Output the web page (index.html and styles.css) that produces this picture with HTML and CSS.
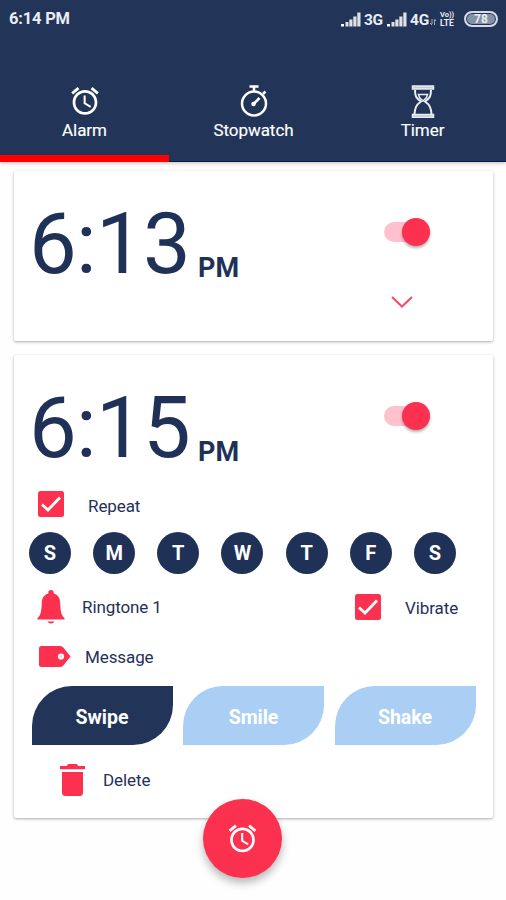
FILE: index.html
```
<!DOCTYPE html>
<html lang="en">
<head>
<meta charset="utf-8">
<title>Alarm</title>
<link rel="stylesheet" href="styles.css">
</head>
<body>
<svg class="defs" aria-hidden="true">
  <symbol id="alarm" viewBox="0 0 24 24"><path d="M22 5.72l-4.6-3.86-1.29 1.53 4.6 3.86L22 5.72zM7.88 3.39L6.6 1.86 2 5.71l1.29 1.53 4.59-3.85zM12.5 8H11v6l4.75 2.85.75-1.23-4-2.37V8zM12 4c-4.97 0-9 4.03-9 9s4.02 9 9 9c4.97 0 9-4.03 9-9s-4.03-9-9-9zm0 16c-3.87 0-7-3.13-7-7s3.13-7 7-7 7 3.13 7 7-3.13 7-7 7z"/></symbol>
  <symbol id="signal" viewBox="0 0 20 15"><path d="M0 12h3v2.500H0z"/><path d="M4.500 10h3v4.500h-3zM8.300 7.500h3.200v7H8.300zM12.300 4.500h3.200v10h-3.200zM16.300.500h3.200v14h-3.200z" opacity=".85"/></symbol>
  <symbol id="check" viewBox="0 0 26 26"><rect width="26" height="26" rx="2.500"/><path d="M4 13.500l6 5.500L22 6.500" fill="none" stroke="#fff" stroke-width="2.800"/></symbol>
</svg>
<header class="header">
  <div class="status">
    <span class="clock">6:14 PM</span>
    <div class="indicators">
      <svg class="signal"><use href="#signal"/></svg>
      <span class="net net-3g">3G</span>
      <svg class="signal"><use href="#signal"/></svg>
      <span class="net">4G</span>
      <svg class="data" viewBox="0 0 6 6"><path d="M2 0v5M4.500 1v5M0 4l2 2M4.500 0l1.500 2" stroke="#fff" opacity=".6" fill="none"/></svg>
      <span class="volte"><span>Vo))</span><span class="lte">LTE</span></span>
      <span class="battery">78</span>
    </div>
  </div>
  <nav class="tabs">
    <a class="tab active">
      <svg class="tab-icon" viewBox="0 0 34 34"><use href="#alarm" x="0.500" y="0.500" width="33" height="33"/></svg>
      <span>Alarm</span>
    </a>
    <a class="tab">
      <svg class="tab-icon line" viewBox="0 0 34 34" stroke="#fff" stroke-width="2.500"><circle cx="17" cy="19.500" r="12"/><path d="M12.500 2.500h9M17 3v5M26 10l2.500-2.500M16.500 20l6-6"/><circle cx="16.500" cy="20" r="1"/></svg>
      <span>Stopwatch</span>
    </a>
    <a class="tab">
      <svg class="tab-icon line" viewBox="0 0 34 34" stroke="#e8ebf1" stroke-width="2"><path d="M6.500 2h21v3h-21zM6.500 30.500h21v3h-21z" fill="#c5cbd8" stroke-width="1.500"/><path d="M9 6c0 6 1 8 6 11.500C10 21 9 24 8.500 30M25 6c0 6-1 8-6 11.500C24 21 25 24 25.500 30"/><path d="M12.500 10.500h9l-1 3-3.500 3.500-3.500-3.500z" stroke-width="1.500"/></svg>
      <span>Timer</span>
    </a>
  </nav>
</header>
<main class="list">
  <section class="card">
    <div class="card-top">
      <div class="time"><span class="digits">6:13</span><span class="ampm">PM</span></div>
      <div class="controls">
        <span class="switch"><span class="knob"></span></span>
        <svg class="chevron" viewBox="0 0 24 14"><path d="M2 2l10 9.500L22 2" fill="none" stroke="#f0506b" stroke-width="2.200"/></svg>
      </div>
    </div>
  </section>
  <section class="card expanded">
    <div class="card-top">
      <div class="time"><span class="digits">6:15</span><span class="ampm">PM</span></div>
      <div class="controls"><span class="switch"><span class="knob"></span></span></div>
    </div>
    <div class="row repeat"><svg class="check"><use href="#check"/></svg><span>Repeat</span></div>
    <div class="days"><span>S</span><span>M</span><span>T</span><span>W</span><span>T</span><span>F</span><span>S</span></div>
    <div class="row ringtone">
      <svg class="bell" viewBox="0 0 28 34"><path d="M14 0a2.700 2.700 0 0 1 2.600 3.500C21 4.500 23 8 23.200 13c.3 8 1 12.500 4.300 15v1.500H.500V28c3.300-2.500 4-7 4.300-15C5 8 7 4.500 11.400 3.500A2.700 2.700 0 0 1 14 0zM10.500 31.500h7c-1 2.500-6 2.500-7 0z"/></svg>
      <span class="ringtone-name">Ringtone 1</span>
      <svg class="check"><use href="#check"/></svg><span class="vibrate">Vibrate</span>
    </div>
    <div class="row message">
      <svg class="tag" viewBox="0 0 32 21"><path d="M2.500 0H21q2 0 3.300 1.500L31.500 10.500 24.300 19.500Q23 21 21 21H2.500Q0 21 0 18.500v-16Q0 0 2.500 0z"/><circle cx="22" cy="10.500" r="3.100" fill="#fff"/><circle cx="22" cy="10.500" r="1" fill="#ffb8c4"/></svg>
      <span>Message</span>
    </div>
    <div class="modes"><button class="mode selected">Swipe</button><button class="mode">Smile</button><button class="mode">Shake</button></div>
    <div class="row delete">
      <svg class="trash" viewBox="0 0 25 32"><path d="M0 2h7q0-2 2-2h7q2 0 2 2h7v3.200H0zM2 8h21v20.500q0 3.500-3.500 3.500h-14Q2 32 2 28.500z"/></svg>
      <span>Delete</span>
    </div>
  </section>
</main>
<button class="fab" aria-label="Add alarm"><svg viewBox="0 0 24 24"><use href="#alarm"/></svg></button>
</body>
</html>
```
FILE: styles.css
```
* { box-sizing: border-box; }
body {
  margin: 0;
  width: 506px;
  height: 900px;
  overflow: hidden;
  position: relative;
  background: #fefefe;
  color: #1f3157;
  font-family: Roboto, "Liberation Sans", sans-serif;
}
svg { display: block; flex: none; }
button { border: 0; padding: 0; font-family: inherit; }
.defs { position: absolute; width: 0; height: 0; }

.header {
  height: 162px;
  background: #223558;
  color: #fff;
  border-bottom: 1px solid #07184a;
  box-shadow: 0 1px 4px rgba(60, 20, 30, .3);
}
.status {
  height: 38px;
  padding: 0 8px 0 9px;
  display: flex;
  justify-content: space-between;
  align-items: center;
  color: #e9ecf2;
}
.clock { font-size: 16.5px; font-weight: 700; line-height: 38px; letter-spacing: -.2px; }
.indicators { display: flex; align-items: center; height: 36px; }
.signal { width: 20px; height: 15px; fill: #fff; }
.net { font-size: 15.5px; font-weight: 700; margin-left: 3px; line-height: 38px; padding-top: 1px; letter-spacing: -.2px; }
.net-3g { margin-right: 4px; }
.data { width: 6px; height: 6px; margin: 5px 4px 0 1px; }
.volte { display: flex; flex-direction: column; align-items: flex-start; width: 17px; font-size: 7.5px; line-height: 8px; font-weight: 700; white-space: nowrap; }
.lte { font-size: 8.500px; }
.battery {
  width: 34px;
  height: 16px;
  margin-left: 7px;
  border: 2px solid #d5dae3;
  border-radius: 8px;
  background: #8390a8;
  box-shadow: inset 0 0 0 1px #223558;
  font-size: 12px;
  line-height: 12px;
  font-weight: 700;
  text-align: center;
}
.tabs { display: grid; grid-template-columns: repeat(3, 169px); height: 124px; }
.tab {
  display: flex;
  flex-direction: column;
  align-items: center;
  padding-top: 46px;
  font-size: 17px;
  line-height: 22px;
  height: 124px;
  letter-spacing: -.05px;
  -webkit-text-stroke: .15px #fff;
}
.tab-icon { width: 34px; height: 34px; fill: #fff; margin-bottom: 1px; }
.tab-icon.line { fill: none; }
.tab.active { border-bottom: 7px solid #fe0000; }

.list { padding: 9px 13px 0 14px; display: grid; gap: 15px; }
.card {
  height: 170px;
  background: #fff;
  border-radius: 2px;
  box-shadow: 0 1px 3px rgba(0, 0, 0, .32);
}
.card.expanded { height: 463px; margin-top: -1px; }
.card-top { display: flex; justify-content: space-between; height: 134px; padding: 28px 63px 0 15px; }
.time { display: flex; }
.digits { font-size: 85px; line-height: 90px; letter-spacing: -.7px; width: 169px; }
.ampm { font-size: 27px; line-height: 32px; font-weight: 700; padding-top: 53px; }
.controls { padding-top: 19px; width: 46px; }
.switch { display: flex; position: relative; justify-content: flex-end; align-items: center; height: 28px; }
.switch::before { content: ""; position: absolute; left: 0; top: 4px; width: 38px; height: 20px; border-radius: 10px; background: #ffc1cd; }
.knob { position: relative; width: 28px; height: 28px; border-radius: 50%; background: #fc304f; box-shadow: 0 2px 3px rgba(0, 0, 0, .32); }
.chevron { width: 24px; height: 14px; margin: 49px 0 0 6px; }

.row { display: flex; align-items: center; font-size: 17px; line-height: 22px; letter-spacing: -.1px; }
.row svg { fill: #fc304f; }
.check { width: 26px; height: 26px; }
.repeat { padding-left: 24px; height: 30px; gap: 24px; }
.repeat span { padding-top: 3px; }
.days { display: flex; justify-content: space-between; padding: 13px 37px 0 15px; height: 68px; }
.days span {
  width: 42px;
  height: 42px;
  border-radius: 50%;
  background: #1f3157;
  color: #fff;
  font-size: 20px;
  line-height: 43px;
  font-weight: 700;
  text-align: center;
}
.ringtone { padding-left: 23px; height: 40px; }
.bell { width: 28px; height: 34px; }
.ringtone-name { margin-left: 17px; width: 273px; }
.vibrate { margin-left: 24px; padding-top: 1px; }
.message { padding-left: 25px; height: 59px; }
.tag { width: 32px; height: 21px; }
.message span { margin-left: 14px; }
.modes { display: grid; grid-template-columns: repeat(3, 141px); gap: 10.5px; padding-left: 17.5px; }
.mode { height: 59px; border-radius: 40px 0; background: #abcff4; color: #fff; font-size: 19.5px; line-height: 59px; padding-top: 2px; font-weight: 700; }
.mode.selected { background: #223558; }
.delete { padding-left: 46px; height: 70px; }
.trash { width: 25px; height: 32px; }
.delete span { margin-left: 18px; }

.fab {
  position: absolute;
  left: 203px;
  top: 799px;
  width: 79px;
  height: 79px;
  border-radius: 50%;
  background: #fc304f;
  display: grid;
  place-items: center;
  box-shadow: 0 5px 9px rgba(0, 0, 0, .28);
}
.fab svg { width: 33px; height: 33px; fill: #fff; }
```
